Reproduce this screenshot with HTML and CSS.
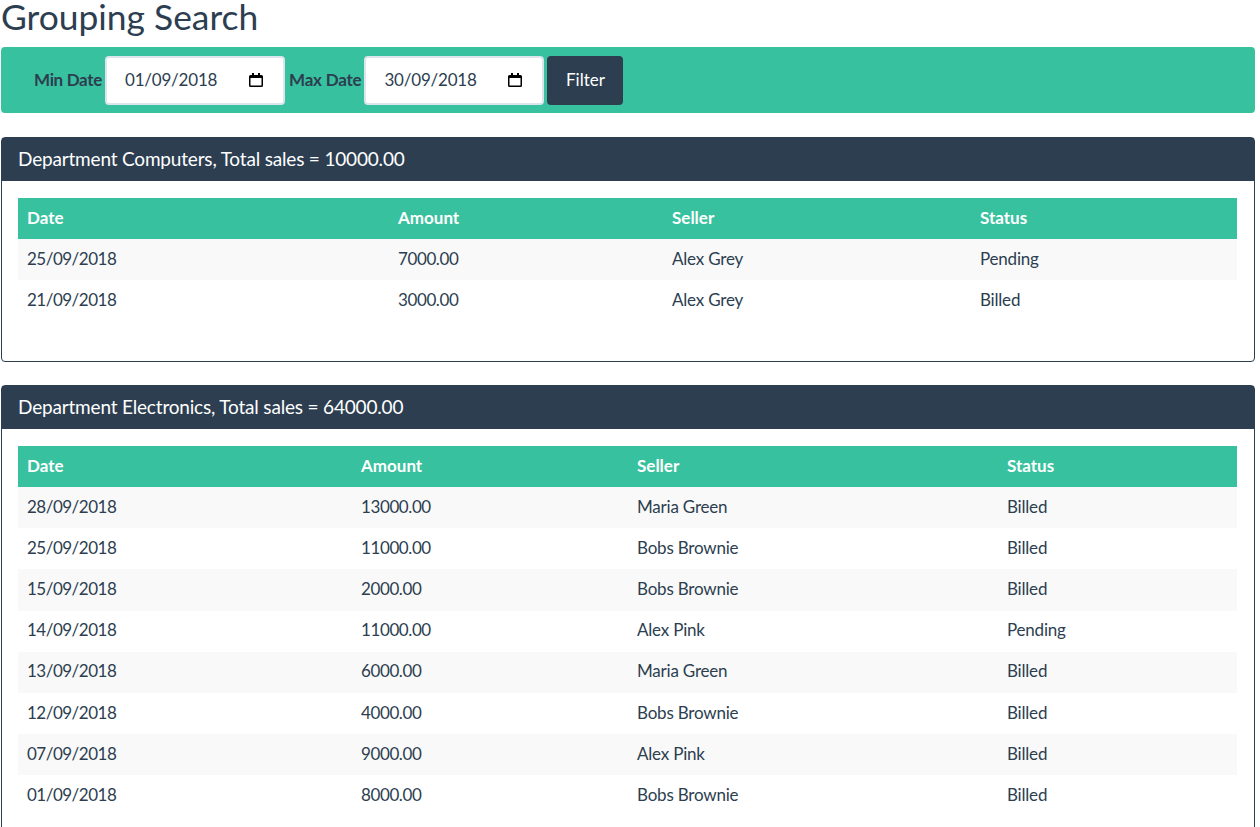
FILE: index.html

```html
<!DOCTYPE html>
<html lang="en">
<head>
    <meta charset="UTF-8">
    <meta name="viewport" content="width=device-width, initial-scale=1.0">
    <title>Grouping Search</title>
    <link rel="stylesheet" href="styles.css">
</head>
<body>
    <h1 class="page-title">Grouping Search</h1>

    <!-- Filter bar -->
    <form class="filter-bar">
        <label class="filter-label">Min Date</label>
        <div class="date-field">
            <span>01/09/2018</span>
            <svg class="cal-icon" viewBox="0 0 16 16"><path d="M4 1h2v2h4V1h2v2h1.500A1.500 1.500 0 0 1 15 4.500v9a1.500 1.500 0 0 1-1.500 1.500h-11A1.500 1.500 0 0 1 1 13.500v-9A1.500 1.500 0 0 1 2.500 3H4zM2.500 6v7.500h11V6z" fill-rule="evenodd"/></svg>
        </div>
        <label class="filter-label">Max Date</label>
        <div class="date-field">
            <span>30/09/2018</span>
            <svg class="cal-icon" viewBox="0 0 16 16"><path d="M4 1h2v2h4V1h2v2h1.500A1.500 1.500 0 0 1 15 4.500v9a1.500 1.500 0 0 1-1.500 1.500h-11A1.500 1.500 0 0 1 1 13.500v-9A1.500 1.500 0 0 1 2.500 3H4zM2.500 6v7.500h11V6z" fill-rule="evenodd"/></svg>
        </div>
        <button class="filter-btn" type="button">Filter</button>
    </form>

    <!-- Computers -->
    <div class="card">
        <div class="card-header">Department Computers, Total sales = 10000.00</div>
        <div class="card-body">
            <table class="sales-table computers">
                <tr><th>Date</th><th>Amount</th><th>Seller</th><th>Status</th></tr>
                <tr><td>25/09/2018</td><td>7000.00</td><td>Alex Grey</td><td>Pending</td></tr>
                <tr><td>21/09/2018</td><td>3000.00</td><td>Alex Grey</td><td>Billed</td></tr>
            </table>
        </div>
    </div>

    <!-- Electronics -->
    <div class="card">
        <div class="card-header">Department Electronics, Total sales = 64000.00</div>
        <div class="card-body">
            <table class="sales-table electronics">
                <tr><th>Date</th><th>Amount</th><th>Seller</th><th>Status</th></tr>
                <tr><td>28/09/2018</td><td>13000.00</td><td>Maria Green</td><td>Billed</td></tr>
                <tr><td>25/09/2018</td><td>11000.00</td><td>Bobs Brownie</td><td>Billed</td></tr>
                <tr><td>15/09/2018</td><td>2000.00</td><td>Bobs Brownie</td><td>Billed</td></tr>
                <tr><td>14/09/2018</td><td>11000.00</td><td>Alex Pink</td><td>Pending</td></tr>
                <tr><td>13/09/2018</td><td>6000.00</td><td>Maria Green</td><td>Billed</td></tr>
                <tr><td>12/09/2018</td><td>4000.00</td><td>Bobs Brownie</td><td>Billed</td></tr>
                <tr><td>07/09/2018</td><td>9000.00</td><td>Alex Pink</td><td>Billed</td></tr>
                <tr><td>01/09/2018</td><td>8000.00</td><td>Bobs Brownie</td><td>Billed</td></tr>
            </table>
        </div>
    </div>
</body>
</html>
```

FILE: styles.css

```css
body {
    font-family: Lato, "Liberation Sans", sans-serif;
    font-size: 17px;
    line-height: 25px;
    color: #2c3e50;
    margin: 0;
    padding: 0 5px 0 1px;
    background-color: #fff;
    overflow: hidden;
}
.page-title {
    font-size: 35.4px;
    font-weight: 400;
    line-height: 33px;
    margin: 0 0 14px;
}
.filter-bar {
    display: flex;
    align-items: center;
    gap: 3px;
    height: 66px;
    padding: 0 0 0 32px;
    background-color: #38c19e;
    border-radius: 4px;
    margin-bottom: 24px;
}
.filter-label {
    font-weight: 700;
    letter-spacing: -0.2px;
    margin-left: 1px;
    padding-bottom: 2px;
}
.filter-label:first-child {
    letter-spacing: -0.32px;
}
.date-field {
    display: flex;
    align-items: center;
    justify-content: space-between;
    box-sizing: border-box;
    width: 180px;
    height: 49px;
    padding: 0 19px 0 18px;
    background: white;
    border: 2px solid #dce4ec;
    border-radius: 4px;
}
.date-field span {
    letter-spacing: -0.2px;
    padding-bottom: 2px;
}
.cal-icon {
    width: 16px;
    height: 16px;
    fill: #000;
}
.filter-btn {
    width: 76px;
    height: 49px;
    padding: 0 0 2px;
    font: inherit;
    color: white;
    background-color: #2c3e50;
    border: 0;
    border-radius: 4px;
}
.card {
    border: 1px solid #2c3e50;
    border-radius: 4px;
    margin-bottom: 23px;
}
.card-header {
    height: 43px;
    line-height: 41px;
    padding: 0 16px;
    font-size: 19px;
    letter-spacing: -0.18px;
    color: white;
    background-color: #2c3e50;
}
.card-body {
    padding: 17px 17px 16px 16px;
}
.sales-table {
    width: 100%;
    table-layout: fixed;
    border-collapse: collapse;
    margin-bottom: 23.625px;
}
.sales-table th, .sales-table td {
    height: 41.125px;
    padding: 0 9px 2.5px;
    text-align: left;
    box-sizing: border-box;
}
.sales-table th {
    padding-bottom: 3px;
    background-color: #38c19e;
    color: white;
}
.computers th:nth-child(1) { width: 371px; }
.computers th:nth-child(2) { width: 274px; }
.computers th:nth-child(3) { width: 308px; }
.electronics th:nth-child(1) { width: 334px; }
.electronics th:nth-child(2) { width: 276px; }
.electronics th:nth-child(3) { width: 370px; }
.sales-table td {
    letter-spacing: -0.2px;
}
.sales-table td:nth-child(1) {
    letter-spacing: -0.5px;
}
.sales-table td:nth-child(2) {
    letter-spacing: -0.4px;
}
.sales-table tr:nth-child(even) td {
    background-color: #f9f9f9;
}
```
